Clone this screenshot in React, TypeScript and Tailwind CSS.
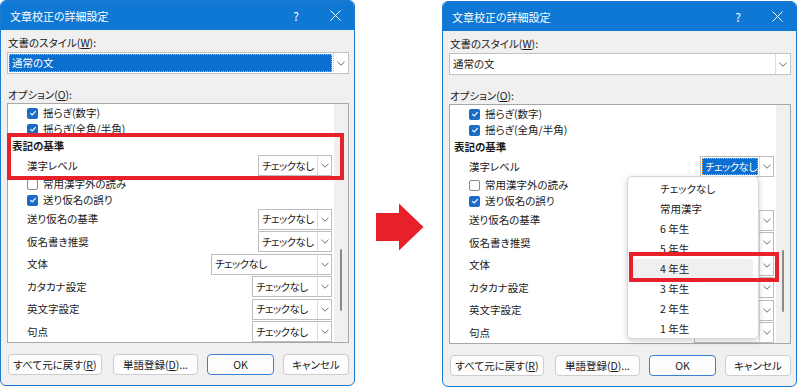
import React from 'react';

type Row =
  | { kind: 'check'; label: string; checked: boolean }
  | { kind: 'head'; label: string }
  | { kind: 'select'; label: string; w: string; h: string; focus?: boolean };

const rows: Row[] = [
  { kind: 'check', label: '揺らぎ(数字)', checked: true },
  { kind: 'check', label: '揺らぎ(全角/半角)', checked: true },
  { kind: 'head', label: '表記の基準' },
  { kind: 'select', label: '漢字レベル', w: 'w-[74px]', h: 'h-[21px]', focus: true },
  { kind: 'check', label: '常用漢字外の読み', checked: false },
  { kind: 'check', label: '送り仮名の誤り', checked: true },
  { kind: 'select', label: '送り仮名の基準', w: 'w-[74px]', h: 'h-[22.5px]' },
  { kind: 'select', label: '仮名書き推奨', w: 'w-[74px]', h: 'h-[22.5px]' },
  { kind: 'select', label: '文体', w: 'w-[121px]', h: 'h-[22.5px]' },
  { kind: 'select', label: 'カタカナ設定', w: 'w-[80px]', h: 'h-[22.5px]' },
  { kind: 'select', label: '英文字設定', w: 'w-[80px]', h: 'h-[22.5px]' },
  { kind: 'select', label: '句点', w: 'w-[80px]', h: 'h-[22.5px]' },
];

const levels = ['チェックなし', '常用漢字', '6 年生', '5 年生', '4 年生', '3 年生', '2 年生', '1 年生'];

function Chevron() {
  return (
    <svg width="8" height="5" viewBox="0 0 8 5">
      <path d="M0.5 0.8 L4 4.2 L7.5 0.8" stroke="#6b6b6b" strokeWidth="1" fill="none" />
    </svg>
  );
}

function Check({ checked }: { checked: boolean }) {
  if (!checked) {
    return <span className="w-[11px] h-[11px] rounded-[2px] border border-[#8a8a8a] bg-white shrink-0" />;
  }
  return (
    <span className="w-[11px] h-[11px] rounded-[2px] bg-[#1a6cc6] flex items-center justify-center shrink-0">
      <svg width="8" height="8" viewBox="0 0 8 8">
        <path d="M1.3 4.1 L3.2 5.9 L6.7 2.1" stroke="white" strokeWidth="1.2" fill="none" />
      </svg>
    </span>
  );
}

function Select({ w, highlighted }: { w: string; highlighted?: boolean }) {
  return (
    <div className={`${w} h-[21px] ml-auto flex border border-[#bdbdbd] bg-white shrink-0`}>
      {highlighted ? (
        <div className="flex-1 m-[1px] bg-[#0a6fd0] border border-dotted border-[#f3a548] flex items-center pl-[2px] text-white overflow-hidden tracking-[-0.6px]">
          チェックなし
        </div>
      ) : (
        <div className="flex-1 flex items-center pl-[3px] overflow-hidden tracking-[-0.6px]">チェックなし</div>
      )}
      <div className="w-[14px] border-l border-[#dcdcdc] flex items-center justify-center shrink-0">
        <Chevron />
      </div>
    </div>
  );
}

function Button({ w, children, primary }: { w: string; children: React.ReactNode; primary?: boolean }) {
  return (
    <div
      className={`${w} h-[21px] rounded-[4px] border ${
        primary ? 'border-[#3b7fd1]' : 'border-[#cdcdcd]'
      } bg-[#fdfdfd] flex items-center justify-center`}
    >
      {children}
    </div>
  );
}

function Dialog({ after }: { after?: boolean }) {
  return (
    <div className="relative w-[355px] h-[386px] shrink-0 border border-[#1b7ad2] rounded-[6px] overflow-hidden bg-[#f0f0f0] flex flex-col">
      <div className="h-[29px] bg-[#0f78d4] text-white flex items-center pl-[9px] text-[11px]">
        <span className="flex-1">文章校正の詳細設定</span>
        <span className="w-[40px] text-center text-[12px]">?</span>
        <span className="w-[38px] flex justify-center">
          <svg width="11" height="11" viewBox="0 0 11 11">
            <path d="M0.5 0.5 L10.5 10.5 M10.5 0.5 L0.5 10.5" stroke="white" strokeWidth="1" />
          </svg>
        </span>
      </div>

      <div className="flex-1 pl-[6px] pr-[5px] pt-[5px] flex flex-col">
        <div className="h-[16px] leading-[16px] pl-[1px]">
          文書のスタイル(<span className="underline">W</span>):
        </div>
        <div className="mt-[1px] h-[22px] flex border border-[#c2c2c2] bg-white">
          {after ? (
            <div className="flex-1 flex items-center pl-[3px]">通常の文</div>
          ) : (
            <div className="flex-1 m-[1px] bg-[#0a6fd0] border border-dotted border-[#f3a548] flex items-center pl-[2px] text-white">
              通常の文
            </div>
          )}
          <div className="w-[15px] border-l border-[#dcdcdc] flex items-center justify-center">
            <Chevron />
          </div>
        </div>

        <div className="mt-[13px] h-[16px] leading-[16px] pl-[1px]">
          オプション(<span className="underline">O</span>):
        </div>
        <div className="h-[240px] border border-[#a8a8a8] bg-white flex overflow-hidden">
          <div className="flex-1 pt-[1px] pr-[2px] flex flex-col">
            {rows.map((r) => {
              if (r.kind === 'check') {
                return (
                  <div key={r.label} className="h-[16px] shrink-0 flex items-center pl-[19px] gap-[5px]">
                    <Check checked={r.checked} />
                    <span>{r.label}</span>
                  </div>
                );
              }
              if (r.kind === 'head') {
                return (
                  <div key={r.label} className="h-[18px] shrink-0 flex items-center pl-[4px] font-bold">
                    {r.label}
                  </div>
                );
              }
              return (
                <div key={r.label} className={`${r.h} shrink-0 flex items-center pl-[19px]`}>
                  <span>{r.label}</span>
                  <Select w={r.w} highlighted={after && r.focus} />
                </div>
              );
            })}
          </div>
          <div className="w-[14px] bg-[#f0f0f0] flex flex-col items-center shrink-0">
            <div className="mt-[145px] w-[2px] h-[62px] rounded-full bg-[#8a8a8a]" />
          </div>
        </div>

        <div className="mt-[11px] flex pl-[1px]">
          <Button w="w-[95px]">
            すべて元に戻す(<span className="underline">R</span>)
          </Button>
          <div className="ml-[11px]">
            <Button w="w-[85px]">
              単語登録(<span className="underline">D</span>)...
            </Button>
          </div>
          <div className="ml-[9px]">
            <Button w="w-[67px]" primary>
              OK
            </Button>
          </div>
          <div className="ml-[9px]">
            <Button w="w-[66px]">キャンセル</Button>
          </div>
        </div>
      </div>

      {after ? (
        <>
          <div className="absolute left-[184px] top-[174px] w-[132px] h-[163px] bg-white border border-[#d6d6d6] rounded-[5px] shadow-[0_2px_6px_rgba(0,0,0,0.18)] pt-[2px] px-[5px]">
            {levels.map((l) => (
              <div
                key={l}
                className={`h-[20px] flex items-center pl-[27px] rounded-[3px] ${l === '4 年生' ? 'bg-[#f0f0f0]' : ''}`}
              >
                {l}
              </div>
            ))}
          </div>
          <div className="absolute left-[186px] top-[250px] w-[150px] h-[30px] border-[4px] border-[#e8202a]" />
        </>
      ) : (
        <div className="absolute left-[6px] top-[132px] w-[337px] h-[47px] border-[4px] border-[#e8202a]" />
      )}
    </div>
  );
}

export default function App() {
  return (
    <div className="w-[800px] h-[387px] bg-white flex items-start whitespace-nowrap text-[10.5px] leading-[16px] text-[#1a1a1a] font-['Noto_Sans_CJK_JP','Noto_Sans',sans-serif] [font-feature-settings:'palt'] overflow-hidden">
      <Dialog />
      <div className="w-[87px] shrink-0 pl-[21px] pt-[203px]">
        <svg width="48" height="48" viewBox="0 0 48 48">
          <path d="M0 10 H23 V0.5 L47.5 24 L23 47.5 V38 H0 Z" fill="#e8202a" strokeLinejoin="round" />
        </svg>
      </div>
      <div className="mt-[1px]">
        <Dialog after />
      </div>
    </div>
  );
}
